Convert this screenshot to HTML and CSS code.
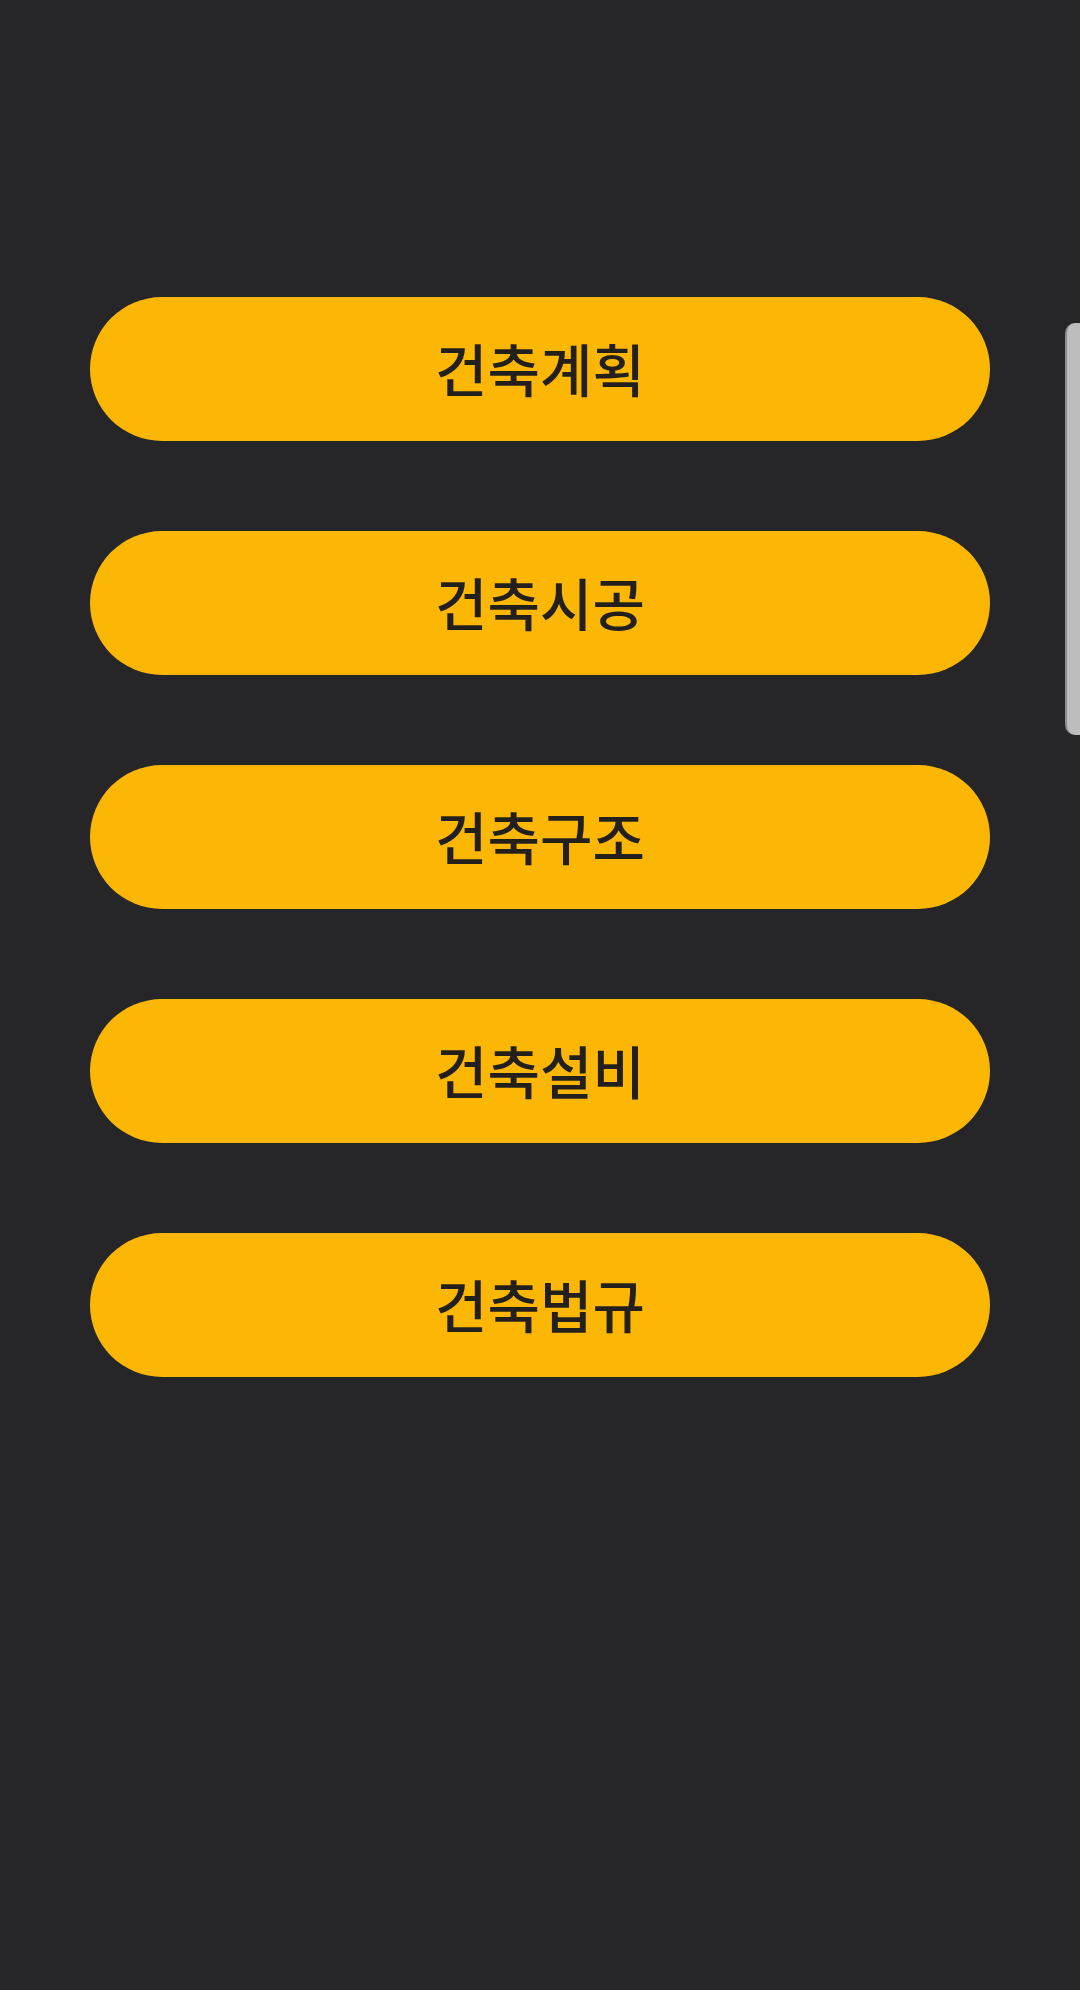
FILE: index.html
```html
<!DOCTYPE html>
<html lang="ko">
<head>
<meta charset="utf-8">
<link rel="stylesheet" href="styles.css">
</head>
<body>
<div class="menu">
  <button class="item">건축계획</button>
  <button class="item">건축시공</button>
  <button class="item">건축구조</button>
  <button class="item">건축설비</button>
  <button class="item">건축법규</button>
</div>
<div class="scrollbar"></div>
</body>
</html>
```
FILE: styles.css
```css
html, body {
  margin: 0;
  padding: 0;
  background: #262527;
  width: 1080px;
  height: 1990px;
  overflow: hidden;
}
.menu {
  display: flex;
  flex-direction: column;
  gap: 90px;
  padding: 297px 0 0 90px;
  width: 900px;
}
.item {
  height: 144px;
  border: none;
  border-radius: 72px;
  background: #fbb703;
  color: #231f1c;
  font-family: "Noto Sans CJK KR", "Noto Sans", sans-serif;
  font-weight: 500;
  font-size: 57px;
  padding: 0 0 4px 0;
  display: flex;
  align-items: center;
  justify-content: center;
}
.scrollbar {
  position: absolute;
  left: 1065px;
  top: 323px;
  width: 15px;
  height: 412px;
  background: #bdbcc0;
  border-left: 2px solid #8d8c90;
  box-sizing: border-box;
  border-radius: 10px 0 0 10px;
}
```
